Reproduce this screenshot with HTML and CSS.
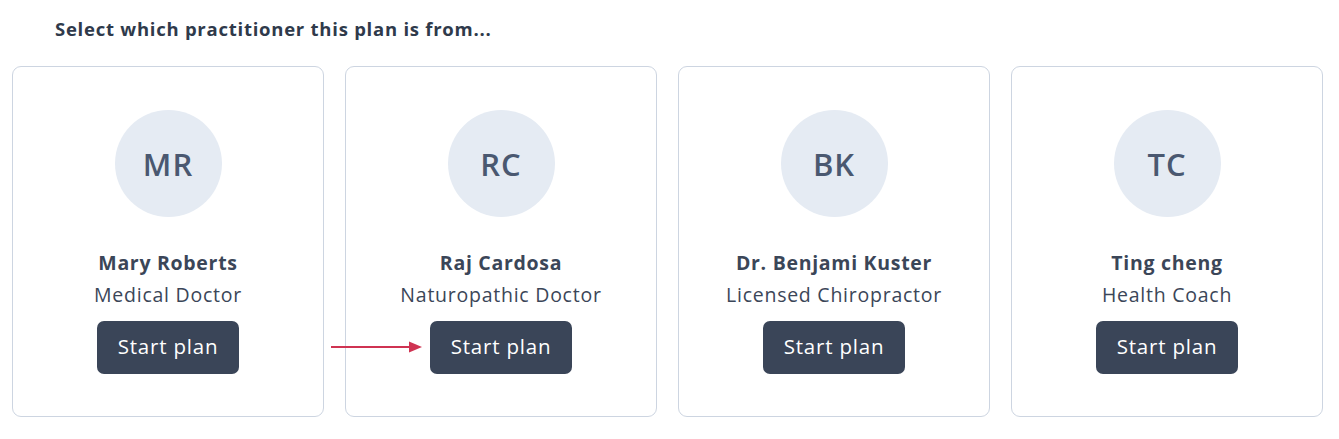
FILE: index.html
```html
<!DOCTYPE html>
<html lang="en">
<head>
<meta charset="utf-8">
<title>Select practitioner</title>
<link rel="stylesheet" href="styles.css">
</head>
<body>
<h1 class="title">Select which practitioner this plan is from...</h1>
<div class="cards">
  <div class="card">
    <div class="avatar">MR</div>
    <div class="name">Mary Roberts</div>
    <div class="role">Medical Doctor</div>
    <button class="btn">Start plan</button>
  </div>
  <div class="card">
    <div class="avatar">RC</div>
    <div class="name">Raj Cardosa</div>
    <div class="role">Naturopathic Doctor</div>
    <div class="btn-wrap">
      <svg class="arrow" width="92" height="14" viewBox="0 0 92 14"><line x1="0" y1="7" x2="80" y2="7" stroke="#cf3352" stroke-width="2.2"/><polygon points="78,1.5 91,7 78,12.5" fill="#cf3352"/></svg>
      <button class="btn">Start plan</button>
    </div>
  </div>
  <div class="card">
    <div class="avatar">BK</div>
    <div class="name">Dr. Benjami Kuster</div>
    <div class="role">Licensed Chiropractor</div>
    <button class="btn">Start plan</button>
  </div>
  <div class="card">
    <div class="avatar">TC</div>
    <div class="name">Ting cheng</div>
    <div class="role">Health Coach</div>
    <button class="btn">Start plan</button>
  </div>
</div>
</body>
</html>
```
FILE: styles.css
```css
html, body {
  margin: 0;
  padding: 0;
  background: #ffffff;
  font-family: "Open Sans", "Noto Sans", sans-serif;
  color: #3b4658;
}
.title {
  margin: 0;
  padding: 17px 0 0 55px;
  font-size: 18.5px;
  line-height: 24px;
  letter-spacing: 0.75px;
  font-weight: 700;
  color: #2f3a4b;
}
.cards {
  display: flex;
  gap: 21px;
  padding: 25px 0 0 12px;
}
.card {
  width: 312px;
  height: 351px;
  box-sizing: border-box;
  border: 1px solid #cdd5e1;
  border-radius: 9px;
  display: flex;
  flex-direction: column;
  align-items: center;
  padding-top: 43px;
}
.avatar {
  width: 107px;
  height: 107px;
  border-radius: 50%;
  background: #e5ebf3;
  display: flex;
  align-items: center;
  justify-content: center;
  font-size: 31px;
  font-weight: 600;
  letter-spacing: 1px;
  color: #4a5870;
}
.name {
  margin-top: 34px;
  font-size: 19.5px;
  line-height: 24px;
  letter-spacing: 0.7px;
  font-weight: 700;
  color: #3b4658;
}
.role {
  margin-top: 8px;
  font-size: 19.5px;
  line-height: 24px;
  letter-spacing: 0.75px;
  color: #3b4658;
}
.btn-wrap {
  position: relative;
}
.btn {
  margin-top: 14px;
  width: 142px;
  height: 53px;
  border: none;
  border-radius: 7px;
  background: #3a4558;
  color: #ffffff;
  font-family: inherit;
  font-size: 20.5px;
  line-height: 24px;
  letter-spacing: 0.8px;
  padding: 0 0 3px;
}
.arrow {
  position: absolute;
  left: -99px;
  top: 33px;
}
```
